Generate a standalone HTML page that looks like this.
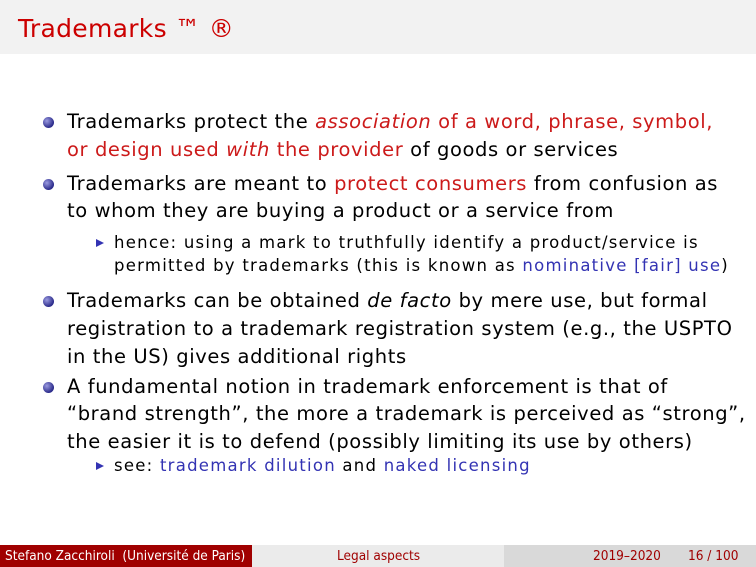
<!DOCTYPE html>
<html><head><meta charset="utf-8"><style>
body{margin:0;width:756px;height:567px;position:relative;background:#fff;overflow:hidden;font-family:"DejaVu Sans","Liberation Sans",sans-serif;}
.t{position:absolute;left:0;top:0;width:756px;height:54px;background:#f2f2f2;}
.t span{position:absolute;left:18px;top:14px;font-size:25px;letter-spacing:0.3px;color:#cc0000;}
.l{position:absolute;left:67px;font-size:19.5px;letter-spacing:0.6px;line-height:24px;height:24px;white-space:nowrap;color:#000;}
.s{position:absolute;left:114px;font-size:16.5px;letter-spacing:1.25px;line-height:20px;height:20px;white-space:nowrap;color:#000;}
.r{color:#cc1a1a}.b{color:#3333b3}
.dot{position:absolute;left:43px;width:11px;height:11px;border-radius:50%;background:radial-gradient(circle at 35% 35%,#9a9ae0,#2a2a8a 70%);}
.tri{position:absolute;left:96px;width:0;height:0;border-left:8px solid #3333b3;border-top:4px solid transparent;border-bottom:4px solid transparent;}
.f{position:absolute;top:545px;height:22px;font-size:13.5px;line-height:22px;font-family:"DejaVu Sans Condensed","DejaVu Sans",sans-serif;}
</style></head><body>
<div class="t"><span>Trademarks ™ ®</span></div>

<div class="dot" style="top:117px"></div>
<div class="l" style="top:110px">Trademarks protect the <span class="r"><i>association</i> of a word, phrase, symbol,</span></div>
<div class="l" style="top:138px"><span class="r">or design used <i>with</i> the provider</span> of goods or services</div>

<div class="dot" style="top:179px"></div>
<div class="l" style="top:172px">Trademarks are meant to <span class="r">protect consumers</span> from confusion as</div>
<div class="l" style="top:199px">to whom they are buying a product or a service from</div>
<div class="tri" style="top:239px"></div>
<div class="s" style="top:233px">hence: using a mark to truthfully identify a product/service is</div>
<div class="s" style="top:256px">permitted by trademarks (this is known as <span class="b">nominative [fair] use</span>)</div>

<div class="dot" style="top:296px"></div>
<div class="l" style="top:289px">Trademarks can be obtained <i>de facto</i> by mere use, but formal</div>
<div class="l" style="top:317px">registration to a trademark registration system (e.g., the USPTO</div>
<div class="l" style="top:345px">in the US) gives additional rights</div>

<div class="dot" style="top:382px"></div>
<div class="l" style="top:375px">A fundamental notion in trademark enforcement is that of</div>
<div class="l" style="top:402px">“brand strength”, the more a trademark is perceived as “strong”,</div>
<div class="l" style="top:430px">the easier it is to defend (possibly limiting its use by others)</div>
<div class="tri" style="top:462px"></div>
<div class="s" style="top:456px">see: <span class="b">trademark dilution</span> and <span class="b">naked licensing</span></div>

<div class="f" style="left:0;width:252px;background:#a00000;color:#fff;"><span style="padding-left:5px">Stefano Zacchiroli&nbsp; (Université de Paris)</span></div>
<div class="f" style="left:252px;width:252px;background:#ebebeb;color:#a00000;"><span style="position:absolute;left:85px">Legal aspects</span></div>
<div class="f" style="left:504px;width:252px;background:#d9d9d9;color:#a00000;"><span style="position:absolute;left:89px">2019–2020</span><span style="position:absolute;left:184px">16 / 100</span></div>
</body></html>
